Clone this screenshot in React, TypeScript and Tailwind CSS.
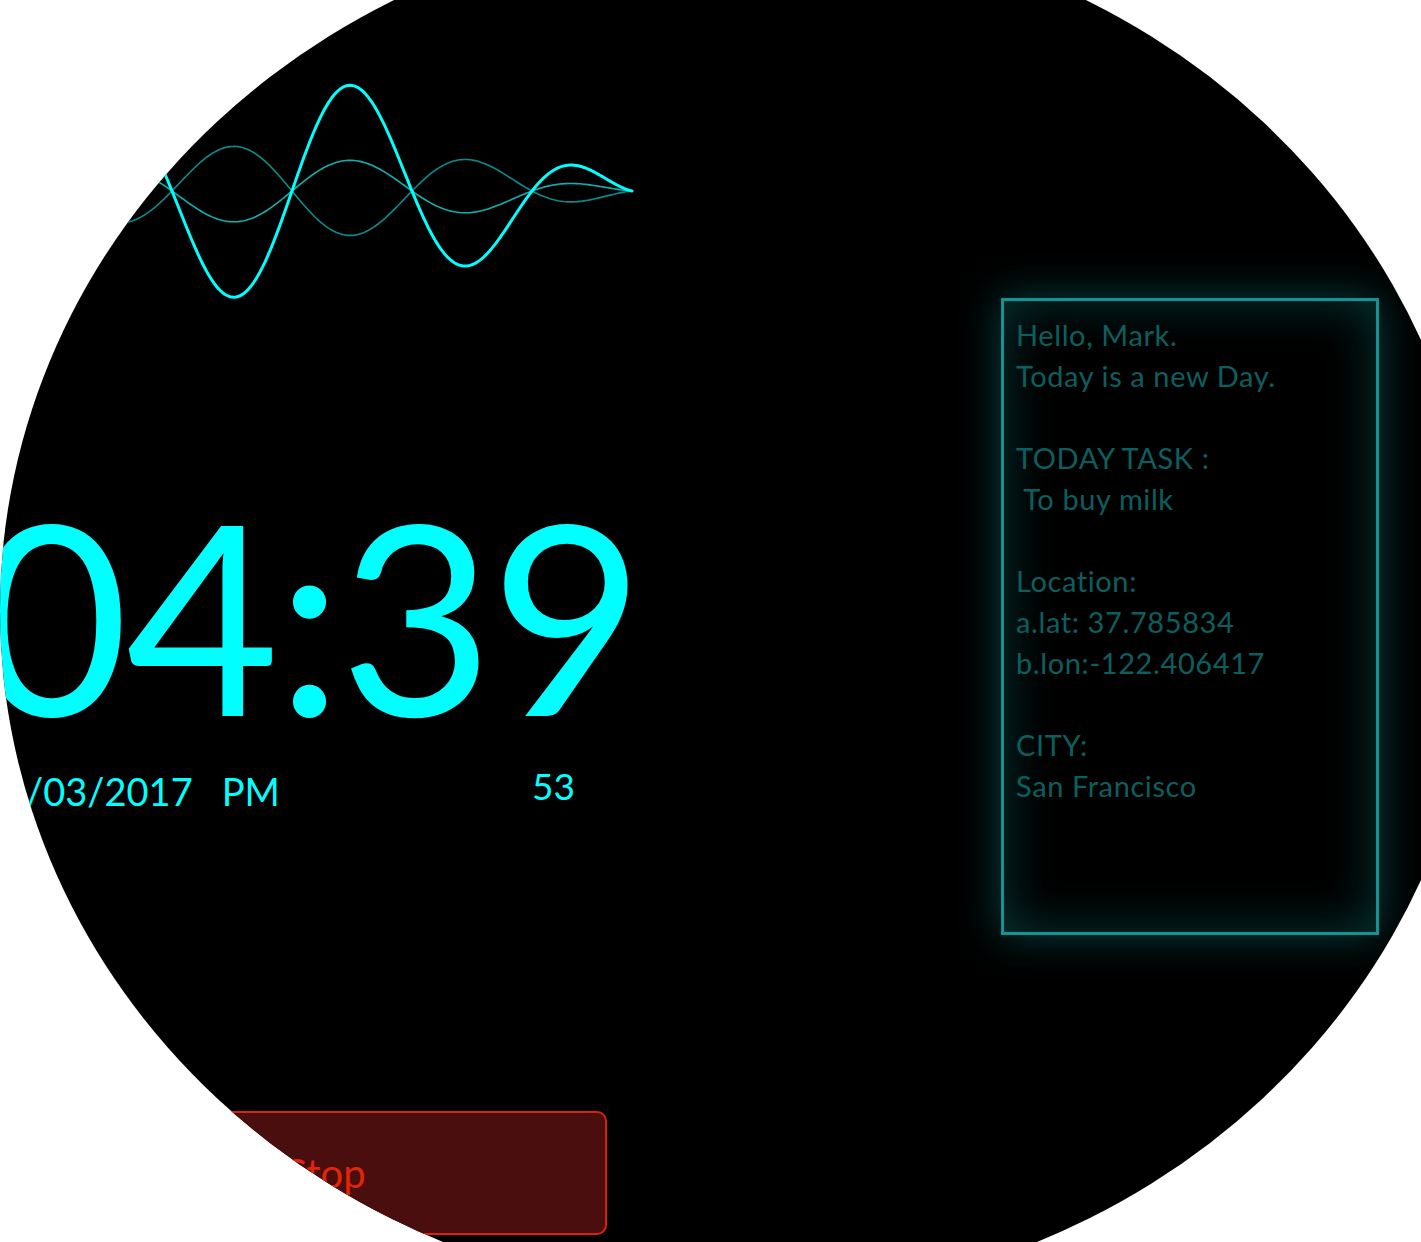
import React from 'react';

// wave envelope + sine, fitted to the reference drawing
const wavePath = (ratio: number) => {
    const pts: string[] = [];
    for (let x = 0; x <= 632; x += 2) {
        const d = (x - 290) / 342;
        const env = Math.abs(d) >= 1 ? 0 : Math.cos((Math.PI / 2) * d);
        const y = 111 + ratio * 110 * env * Math.sin((Math.PI * (x - 172)) / 120);
        pts.push(`${x === 0 ? 'M' : 'L'}${x},${y.toFixed(2)}`);
    }
    return pts.join(' ');
};

const Wave: React.FC = () => (
    <svg width="640" height="230" viewBox="0 0 640 230" className="block">
        <path d={wavePath(-0.42)} fill="none" stroke="#0b8b8b" strokeWidth="1.6" />
        <path d={wavePath(0.29)} fill="none" stroke="#10b0b0" strokeWidth="1.6" />
        <path d={wavePath(1)} fill="none" stroke="#00ffff" strokeWidth="3" strokeLinecap="round" />
    </svg>
);

const lines = [
    'Hello, Mark.',
    'Today is a new Day.',
    '',
    'TODAY TASK :',
    '\u00a0To buy milk',
    '',
    'Location:',
    'a.lat: 37.785834',
    'b.lon:-122.406417',
    '',
    'CITY:',
    'San Francisco',
];

const InfoCard: React.FC = () => (
    <div className="w-[378px] h-[637px] border-[3px] border-[#139494] pl-[12px] pt-[13px] shadow-[0_0_40px_rgba(18,143,143,0.45),inset_0_0_50px_rgba(18,143,143,0.38)]">
        {lines.map((l, i) => (
            <div key={i} className="h-[41px] text-[29px] leading-[41px] tracking-[0.6px] text-[#0b5f5f] whitespace-pre">
                {l}
            </div>
        ))}
    </div>
);

export default function App() {
    return (
        <div className="w-[1421px] h-[1242px] overflow-hidden bg-white font-['Lato',sans-serif]">
            <div className="w-[1480px] h-[1380px] -mt-[80px] rounded-[50%] bg-black overflow-hidden flex">
                <div className="w-[640px] shrink-0 flex flex-col pt-[160px]">
                    <Wave />
                    <div className="mt-[171px] -ml-[25px] text-[265px] leading-none tracking-[-3px] text-[#00ffff] whitespace-nowrap">
                        04:39
                    </div>
                    <div className="mt-[26px] w-[575px] flex items-start text-[#00ffff]">
                        <span className="-ml-[18px] text-[38px] leading-none">11/03/2017</span>
                        <span className="ml-[29px] text-[38px] leading-none">PM</span>
                        <span className="ml-auto -mt-[5px] text-[37px] leading-none">53</span>
                    </div>
                    <button className="mt-[301px] ml-[44px] w-[563px] h-[124px] rounded-[10px] border-2 border-[#d9230a] bg-[#4a0e0e] text-[40px] leading-none text-[#e0250b]">
                        Stop
                    </button>
                </div>
                <div className="ml-[361px] pt-[378px]">
                    <InfoCard />
                </div>
            </div>
        </div>
    );
}
